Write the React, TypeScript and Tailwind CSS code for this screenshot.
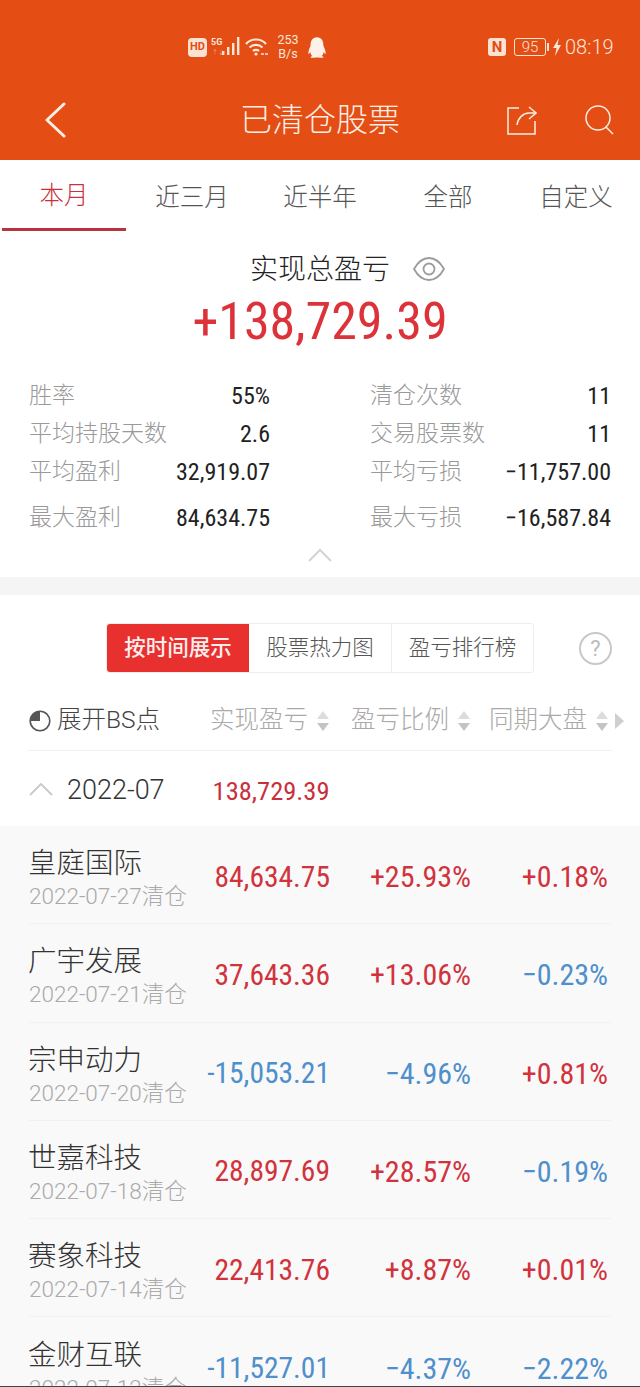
import React from "react";
import { FaQq } from "react-icons/fa";

const FONT = "font-['Roboto','Noto_Sans_CJK_SC',sans-serif]";
// the digits in the reference are narrower than plain Roboto
const NUM = "[font-stretch:80%] whitespace-nowrap";

const tabs = ["本月", "近三月", "近半年", "全部", "自定义"];

const stats = [
  [
    { label: "胜率", value: "55%" },
    { label: "平均持股天数", value: "2.6" },
    { label: "平均盈利", value: "32,919.07" },
    { label: "最大盈利", value: "84,634.75" },
  ],
  [
    { label: "清仓次数", value: "11" },
    { label: "交易股票数", value: "11" },
    { label: "平均亏损", value: "-11,757.00" },
    { label: "最大亏损", value: "-16,587.84" },
  ],
];

const rows = [
  { name: "皇庭国际", date: "2022-07-27清仓", profit: "84,634.75", ratio: "+25.93%", market: "+0.18%" },
  { name: "广宇发展", date: "2022-07-21清仓", profit: "37,643.36", ratio: "+13.06%", market: "-0.23%" },
  { name: "宗申动力", date: "2022-07-20清仓", profit: "-15,053.21", ratio: "-4.96%", market: "+0.81%" },
  { name: "世嘉科技", date: "2022-07-18清仓", profit: "28,897.69", ratio: "+28.57%", market: "-0.19%" },
  { name: "赛象科技", date: "2022-07-14清仓", profit: "22,413.76", ratio: "+8.87%", market: "+0.01%" },
  { name: "金财互联", date: "2022-07-12清仓", profit: "-11,527.01", ratio: "-4.37%", market: "-2.22%" },
];

function colorOf(v: string) {
  return v.startsWith("-") ? "text-[#4f8fcb]" : "text-[#d1333d]";
}

function SortIcon() {
  return (
    <svg width="14" height="22" viewBox="0 0 14 22" className="shrink-0">
      <path d="M7 1 L13 9 H1 Z" fill="#dcdcdc" />
      <path d="M7 21 L13 13 H1 Z" fill="#c4c4c4" />
    </svg>
  );
}

function StatusBar() {
  return (
    <div className="relative h-[93px] text-[#fbe6d8]">
      <div className="absolute left-[188px] top-[37px] flex h-[20px] items-center">
        <div className="flex h-[19px] w-[19px] items-center justify-center rounded-[4px] bg-[#fbe3d3] text-[11px] font-bold text-[#e44d14]">
          HD
        </div>
        <svg width="32" height="20" viewBox="0 0 32 20" className="ml-[4px]">
          <text x="0" y="8" fontSize="9" fontWeight="700" fill="#fbe6d8">5G</text>
          <text x="1" y="17" fontSize="6" fill="#f7a77f">↑↓</text>
          <rect x="11" y="14" width="2.4" height="4" fill="#fbe6d8" />
          <rect x="16" y="10" width="2.4" height="8" fill="#fbe6d8" />
          <rect x="21" y="6" width="2.4" height="12" fill="#fbe6d8" />
          <rect x="26" y="0" width="2.4" height="18" fill="#fbe6d8" />
        </svg>
        <svg width="24" height="20" viewBox="0 0 24 20" className="ml-[2px]" fill="none" stroke="#fbe6d8" strokeWidth="2.2">
          <path d="M1 7 C6 1 16 1 21 7" />
          <path d="M4.5 10.5 C8 7 14 7 17.5 10.5" />
          <path d="M8 14 C9.5 12.5 12.5 12.5 14 14" />
          <circle cx="11" cy="17" r="1.6" fill="#fbe6d8" stroke="none" />
          <path d="M16 17 H19 M20 17 H23" stroke="#fbe6d8" strokeWidth="1.6" />
        </svg>
        <div className="ml-[8px] flex w-[22px] flex-col items-center text-[12.5px] leading-[14px]">
          <span>253</span>
          <span>B/s</span>
        </div>
        <FaQq className="ml-[9px] h-[21px] w-[18px] text-[#fdf1e8]" />
      </div>
      <div className="absolute left-[488px] top-[36px] flex h-[22px] items-center">
        <div className="flex h-[18px] w-[18px] items-center justify-center rounded-[3px] bg-[#fbe3d3] text-[15px] font-bold leading-none text-[#e44d14]">
          N
        </div>
        <div className="ml-[8px] flex h-[18px] w-[32px] items-center justify-center rounded-[3px] border border-[#fbe3d3] text-[15px] font-light leading-none">
          95
        </div>
        <div className="ml-[1px] h-[8px] w-[2px] bg-[#fbe3d3]" />
        <svg width="10" height="18" viewBox="0 0 10 18" className="ml-[3px]">
          <path d="M7 0 L1 10 H4.5 L3 18 L9 7 H5.5 Z" fill="#fbe6d8" />
        </svg>
        <span className="ml-[3px] text-[20px] font-light leading-none">08:19</span>
      </div>
    </div>
  );
}

function Header() {
  return (
    <div className="h-[160px] bg-[#e44d14]">
      <StatusBar />
      <div className="flex h-[53px] items-center pl-[45px] pr-[25px]">
        <svg width="21" height="36" viewBox="0 0 21 36" fill="none" stroke="#fbeee4" strokeWidth="3" strokeLinecap="round" strokeLinejoin="round" className="shrink-0">
          <path d="M19 2 L2 18 L19 34" />
        </svg>
        <span className="ml-[174px] whitespace-nowrap text-[32px] font-light leading-none text-[#fbeee4]">已清仓股票</span>
        <div className="ml-auto flex items-center gap-[48px]">
          <svg width="30" height="30" viewBox="0 0 30 30" fill="none" stroke="#fbeee4" strokeWidth="1.5">
            <path d="M12 3 H1 V29 H28 V16" />
            <path d="M10 20 C11 13 16 8 22 8 H28" />
            <path d="M22 2 L29 8 L22 14" />
          </svg>
          <svg width="30" height="30" viewBox="0 0 30 30" fill="none" stroke="#fbeee4" strokeWidth="1.5">
            <circle cx="13" cy="13" r="12" />
            <path d="M21 22 L28 29" />
          </svg>
        </div>
      </div>
    </div>
  );
}

function Tabs() {
  return (
    <div className="flex h-[72px] bg-white">
      {tabs.map((t, i) => (
        <div
          key={t}
          className={`relative flex flex-1 items-center justify-center pt-[5px] text-[24.5px] font-light ${
            i === 0 ? "text-[#c9303c]" : "text-[#555]"
          }`}
        >
          <span className={i === 0 ? "-mt-[4px]" : ""}>{t}</span>
          {i === 0 && <div className="absolute bottom-[1px] left-[2px] right-[2px] h-[3px] bg-[#b8323f]" />}
        </div>
      ))}
    </div>
  );
}

function Summary() {
  return (
    <div className="h-[345px] bg-white">
      <div className="relative flex justify-center pt-[20px]">
        <span className="text-[28px] font-light leading-[36px] text-[#222]">实现总盈亏</span>
        <svg width="32" height="24" viewBox="0 0 32 24" fill="none" stroke="#9b9b9b" strokeWidth="1.8" className="absolute left-[413px] top-[25px]">
          <path d="M1 12 C6 3 12 1 16 1 C20 1 26 3 31 12 C26 21 20 23 16 23 C12 23 6 21 1 12 Z" />
          <circle cx="16" cy="12" r="5.5" />
        </svg>
      </div>
      <div className={`mt-[6px] text-center text-[52px] font-[450] leading-[56px] text-[#dc323a] ${NUM}`}>+138,729.39</div>
      <div className="mt-[27px] flex justify-between pl-[29px] pr-[29px]">
        {stats.map((col, c) => (
          <div key={c} className="flex w-[241px] flex-col">
            {col.map((s, i) => (
              <div key={s.label} className={`flex h-[38px] items-center justify-between ${i === 3 ? "mt-[8px]" : ""}`}>
                <span className="text-[23px] font-light text-[#999]">{s.label}</span>
                <span className={`text-[24px] font-[450] text-[#222] ${NUM}`}>{s.value.replace("-", "−")}</span>
              </div>
            ))}
          </div>
        ))}
      </div>
      <div className="mt-[11px] flex justify-center">
        <svg width="24" height="14" viewBox="0 0 24 14" fill="none" stroke="#d4d4d4" strokeWidth="2">
          <path d="M1 13 L12 2 L23 13" />
        </svg>
      </div>
    </div>
  );
}

function Segments() {
  return (
    <div className="relative flex h-[96px] items-center bg-white pl-[106px] pt-[10px]">
      <div className="flex h-[50px] w-[428px] rounded-[3px] border border-[#eee] text-[21.5px]">
        <div className="flex w-[142px] items-center justify-center rounded-l-[3px] bg-[#e8302f] font-medium text-[#fdeeee]">
          按时间展示
        </div>
        <div className="flex w-[143px] items-center justify-center border-r border-[#eee] font-light text-[#555]">
          股票热力图
        </div>
        <div className="flex flex-1 items-center justify-center font-light text-[#555]">盈亏排行榜</div>
      </div>
      <div className="absolute left-[579px] top-[37px] flex h-[33px] w-[33px] items-center justify-center rounded-full border-2 border-[#c8c8c8] text-[22px] text-[#bbb]">
        ?
      </div>
    </div>
  );
}

function TableHead() {
  return (
    <div className="mx-[28px] flex h-[60px] items-center whitespace-nowrap border-b border-[#f2f2f2] bg-white">
      <svg width="22" height="22" viewBox="0 0 22 22" className="ml-[1px] shrink-0">
        <circle cx="11" cy="11" r="9.8" fill="none" stroke="#555" strokeWidth="1.6" />
        <path d="M11 11 V1 A10 10 0 0 0 1 11 Z" fill="#555" />
      </svg>
      <span className="ml-[6px] w-[104px] shrink-0 text-[24.5px] font-light text-[#444]">展开BS点</span>
      <span className="ml-[49px] shrink-0 text-[24.5px] font-light text-[#aaa]">实现盈亏</span>
      <span className="ml-[8px] shrink-0"><SortIcon /></span>
      <span className="ml-[21px] shrink-0 text-[24.5px] font-light text-[#aaa]">盈亏比例</span>
      <span className="ml-[8px] shrink-0"><SortIcon /></span>
      <span className="ml-[18px] shrink-0 text-[24.5px] font-light text-[#aaa]">同期大盘</span>
      <span className="ml-[8px] shrink-0"><SortIcon /></span>
      <svg width="9" height="16" viewBox="0 0 9 16" className="ml-[6px] shrink-0">
        <path d="M0 0 L9 8 L0 16 Z" fill="#cfcfcf" />
      </svg>
    </div>
  );
}

function MonthRow() {
  return (
    <div className="flex h-[75px] items-center bg-white pl-[29px] pt-[4px]">
      <svg width="24" height="14" viewBox="0 0 24 14" fill="none" stroke="#c8c8c8" strokeWidth="1.8" className="-mt-[4px]">
        <path d="M1 13 L12 2 L23 13" />
      </svg>
      <span className="ml-[14px] text-[27px] font-light text-[#333]">2022-07</span>
      <span className={`ml-[48px] text-[26.5px] font-[450] text-[#c9303c] ${NUM}`}>138,729.39</span>
    </div>
  );
}

function StockRow({ row }: { row: (typeof rows)[number] }) {
  return (
    <div className="mx-[29px] flex h-[98.3px] shrink-0 items-center border-b border-[#f1f1f1] pt-[4px]">
      <div className="w-[160px] shrink-0 pt-[2px]">
        <div className="-ml-[1px] text-[28.5px] font-light leading-[38px] text-[#333]">{row.name}</div>
        <div className="whitespace-nowrap text-[22.5px] font-light leading-[27px] text-[#aaa]">{row.date}</div>
      </div>
      <div className={`w-[141px] text-right text-[29.5px] font-[450] ${NUM} ${colorOf(row.profit)}`}>{row.profit}</div>
      <div className={`w-[141px] text-right text-[30px] font-[450] ${NUM} ${colorOf(row.ratio)}`}>{row.ratio.replace("-", "−")}</div>
      <div className={`w-[137px] text-right text-[30px] font-[450] ${NUM} ${colorOf(row.market)}`}>{row.market.replace("-", "−")}</div>
    </div>
  );
}

export default function App() {
  return (
    <div className={`relative h-[1387px] w-[640px] overflow-hidden bg-white ${FONT}`}>
      <Header />
      <Tabs />
      <Summary />
      <div className="h-[18px] bg-[#f5f5f5]" />
      <Segments />
      <TableHead />
      <MonthRow />
      <div className="flex flex-col bg-[#f9f9f9]">
        {rows.map((r) => (
          <StockRow key={r.name} row={r} />
        ))}
      </div>
      <div className="absolute bottom-0 left-0 h-[1px] w-full bg-[#444]" />
    </div>
  );
}
